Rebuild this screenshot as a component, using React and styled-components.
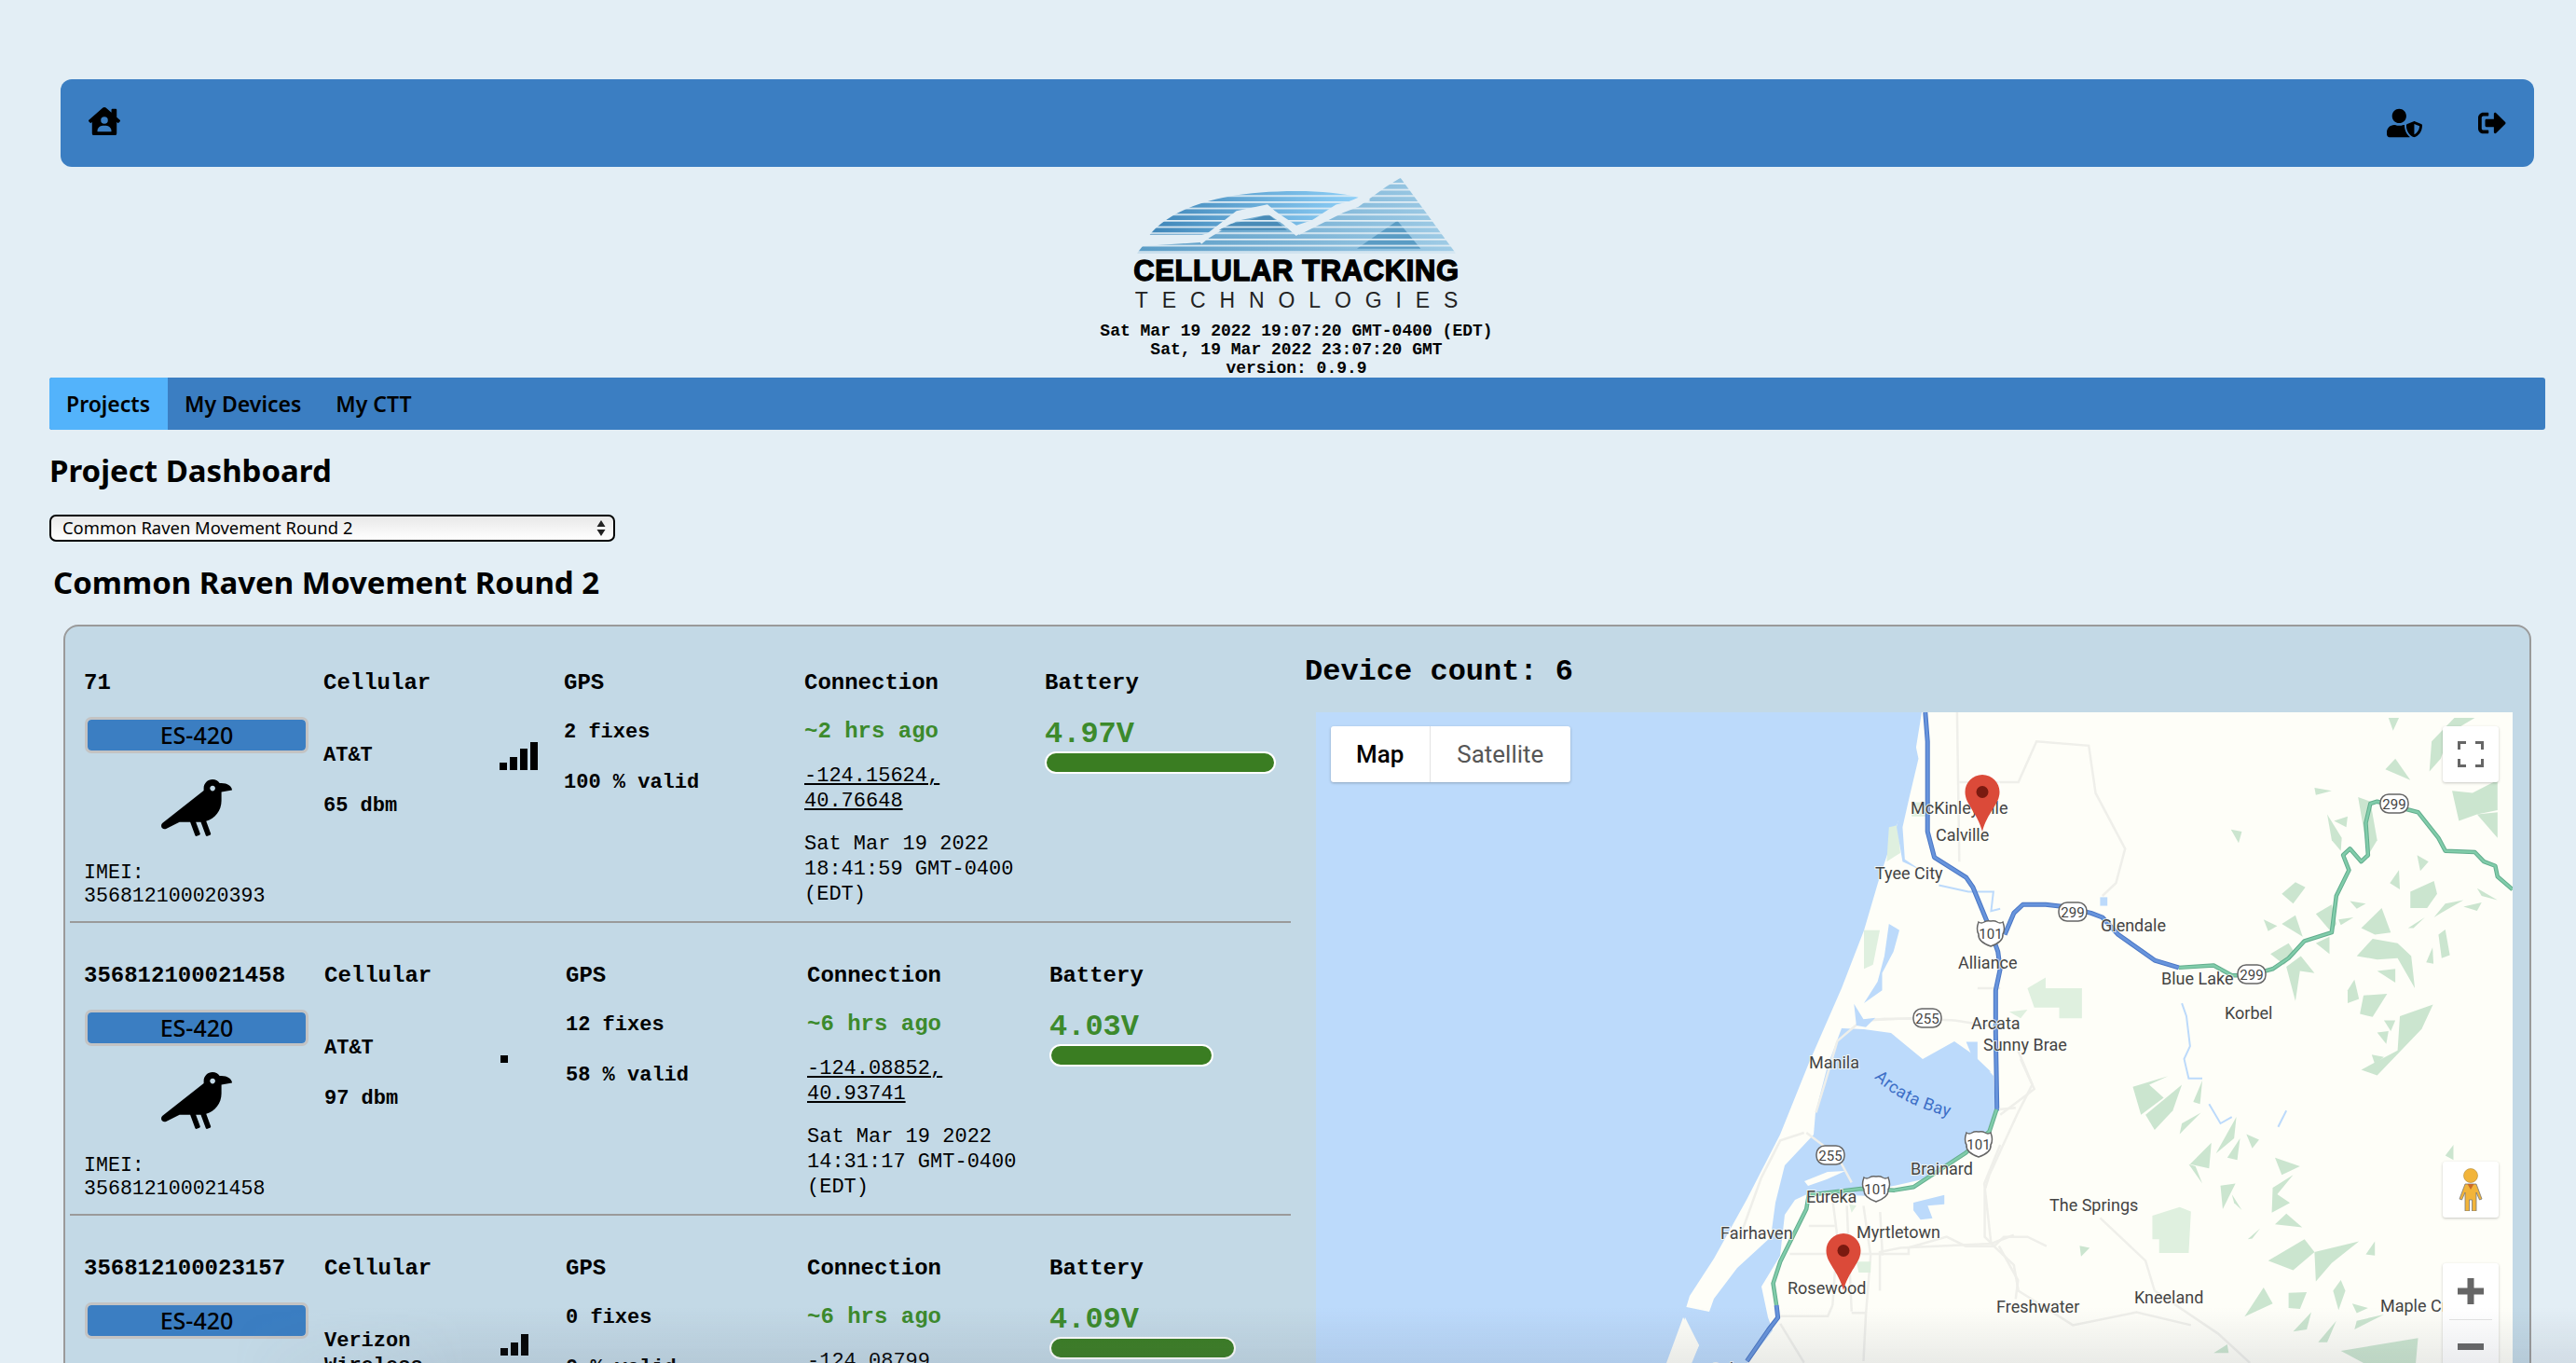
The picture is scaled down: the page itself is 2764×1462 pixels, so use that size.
import React from 'react'
import styled, { createGlobalStyle } from 'styled-components'
import { FaHouseUser, FaUserShield, FaSignOutAlt, FaCrow } from 'react-icons/fa'

const GlobalStyle = createGlobalStyle`
  html, body {
    margin: 0;
    height: 1462px;
    overflow: hidden;
    background: #e3eef5;
    color: #000;
  }
`

const Page = styled.div`
  height: 1462px;
  overflow: hidden;
  padding: 85px 33px 0 53px;
  box-sizing: border-box;
`

const TopBar = styled.header`
  margin: 0 12px 0 12px;
  height: 94px;
  background: #3b7ec2;
  border-radius: 12px;
  display: flex;
  align-items: flex-start;
  justify-content: space-between;
  padding: 28px 30px 0;
  box-sizing: border-box;
`

const IconGroup = styled.div`
  display: flex;
  align-items: center;
  gap: 60px;
`

const Brand = styled.div`
  display: flex;
  flex-direction: column;
  align-items: center;
  padding-right: 2px;
  margin-top: 1px;
`

const LogoName = styled.div`
  font: 900 31px/30px "Liberation Sans", Arial, sans-serif;
  -webkit-text-stroke: 1.3px #000;
  letter-spacing: 0.6px;
  margin-top: 4px;
  white-space: nowrap;
`

const LogoSub = styled.div`
  font: 400 23px/30px "Liberation Sans", Arial, sans-serif;
  color: #222;
  letter-spacing: 14.9px;
  margin-right: -15px;
  margin-top: 1px;
  white-space: nowrap;
`

const Stamp = styled.div`
  font: 700 18px/20px "Liberation Mono", "Courier New", monospace;
  text-align: center;
  margin-top: ${p => p.$top || 0}px;
`

const NavBar = styled.nav`
  height: 56px;
  background: #3b7ec2;
  border-radius: 3px;
  display: flex;
`

const NavTab = styled.a`
  display: flex;
  align-items: center;
  padding: 0 19px 0 18px;
  font: 600 23px/1 "Noto Sans", "Open Sans", sans-serif;
  background: ${p => (p.$active ? '#53b3fb' : 'transparent')};
  border-radius: ${p => (p.$active ? '3px 0 0 3px' : '0')};
`

const PageTitle = styled.h1`
  margin: 20px 0 0;
  font: 700 33px/48px "Noto Sans", "Open Sans", sans-serif;
`

const SelectWrap = styled.div`
  position: relative;
  width: 607px;
  height: 29px;
  margin-top: 23px;
`

const ProjectSelect = styled.select`
  appearance: none;
  width: 100%;
  height: 100%;
  box-sizing: border-box;
  border: 2px solid #000;
  border-radius: 7px;
  background: linear-gradient(#e8e8e8, #ffffff);
  padding: 0 0 0 12px;
  font: 400 18.4px/1 "Noto Sans", "Open Sans", sans-serif;
  color: #000;
`

const SelectArrows = styled.svg`
  position: absolute;
  right: 10px;
  top: 6px;
  pointer-events: none;
`

const ProjectName = styled.h2`
  margin: 20px 0 0 4px;
  font: 700 33px/48px "Noto Sans", "Open Sans", sans-serif;
`

const Panel = styled.section`
  margin: 21px 0 0 15px;
  width: 2648px;
  box-sizing: border-box;
  border: 2px solid #9a9a9a;
  border-radius: 16px;
  background: #c3d9e6;
  display: flex;
  height: 900px;
  overflow: hidden;
`

const DeviceList = styled.div`
  width: 1310px;
  margin-left: 5px;
  padding-top: 4px;
  flex: none;
`

const Row = styled.article`
  height: 314px;
  box-sizing: border-box;
  padding: 43px 0 0 15px;
  border-bottom: 2px solid #9a9a9a;
  display: grid;
  grid-template-columns: ${p => p.$cols};
  align-content: start;
  font-family: "Liberation Mono", "Courier New", monospace;
`

const Cell = styled.div`
  display: flex;
  flex-direction: column;
  align-items: flex-start;
`

const Head = styled.div`
  font-size: 24px;
  font-weight: 700;
  line-height: 28px;
  white-space: nowrap;
`

const Badge = styled.div`
  width: 240px;
  height: 39px;
  box-sizing: border-box;
  margin: 22px 0 0 1px;
  border: 3px solid #c3c3c3;
  border-radius: 7px;
  background: #3b7ec2;
  background-clip: padding-box;
  display: flex;
  align-items: center;
  justify-content: center;
  font: 500 25px/1 "Noto Sans", sans-serif;
`

const BirdWrap = styled.div`
  width: 242px;
  height: 61px;
  margin-top: 28px;
  display: flex;
  justify-content: center;
`

const Imei = styled.div`
  margin-top: 27px;
  font-size: 21.6px;
  line-height: 25px;
`

const CellularBody = styled.div`
  display: grid;
  grid-template-columns: 189px auto;
`

const Carrier = styled.div`
  padding-top: 50px;
  font-size: 22px;
  font-weight: 700;
  line-height: 27px;
  display: flex;
  flex-direction: column;
  gap: 27px;
`

const Bars = styled.div`
  display: flex;
  align-items: flex-end;
  gap: 3px;
  height: 30px;
  margin-top: 49px;
`

const SignalBar = styled.span`
  width: 8px;
  height: ${p => p.$h}px;
  background: #000;
`

const GpsBody = styled.div`
  margin-top: 25px;
  font-size: 22px;
  font-weight: 700;
  line-height: 27px;
  display: flex;
  flex-direction: column;
  gap: 27px;
`

const LastSeen = styled.div`
  margin-top: 24px;
  color: #3c8a2c;
  font-size: 24px;
  font-weight: 700;
  line-height: 28px;
  white-space: nowrap;
`

const Coords = styled.a`
  margin-top: 20px;
  font-size: 22px;
  line-height: 27px;
  text-decoration: underline;
  width: 258px;
`

const Stamped = styled.div`
  margin-top: 19px;
  font-size: 22px;
  line-height: 27px;
  width: 258px;
`

const Volts = styled.div`
  margin-top: 22px;
  color: #3c8a2c;
  font-size: 32px;
  font-weight: 700;
  line-height: 37px;
`

const BatteryBar = styled.div`
  width: ${p => p.$w}px;
  height: 24px;
  box-sizing: border-box;
  border: 2px solid #fff;
  border-radius: 12px;
  background: #3a7d22;
`

const MapColumn = styled.div`
  margin-left: 15px;
  flex: 1;
  min-width: 0;
  padding-top: 30px;
`

const DeviceCount = styled.div`
  font: 700 32px/38px "Liberation Mono", "Courier New", monospace;
`

const MapFrame = styled.div`
  position: relative;
  margin: 24px 0 0 12px;
  width: 1284px;
  height: 760px;
  overflow: hidden;
  background: #bcdafb;
`

const MapCanvas = styled.svg`
  display: block;
  width: 1284px;
  height: 760px;
`

const MapType = styled.div`
  position: absolute;
  left: 16px;
  top: 15px;
  width: 257px;
  height: 60px;
  display: flex;
  background: #fff;
  border-radius: 3px;
  box-shadow: 0 1px 3px rgba(0, 0, 0, 0.25);
`

const MapTypeBtn = styled.div`
  display: flex;
  align-items: center;
  justify-content: center;
  width: ${p => p.$w}px;
  font: ${p => (p.$on ? 500 : 400)} 26px/1 Roboto, sans-serif;
  color: ${p => (p.$on ? '#000' : '#565656')};
  border-right: ${p => (p.$on ? '1px solid #e3e3e3' : 'none')};
`

const MapButton = styled.div`
  position: absolute;
  left: 1209px;
  top: ${p => p.$top}px;
  width: 60px;
  height: ${p => p.$h || 60}px;
  background: #fff;
  border-radius: 3px;
  box-shadow: 0 1px 3px rgba(0, 0, 0, 0.22);
  display: flex;
  flex-direction: column;
  align-items: center;
  justify-content: center;
`

const ZoomStep = styled.div`
  height: 60px;
  width: 46px;
  display: flex;
  align-items: center;
  justify-content: center;
  border-bottom: ${p => (p.$line ? '1px solid #e4e4e4' : 'none')};
`

const Vignette = styled.div`
  position: fixed;
  left: 0;
  right: 0;
  bottom: 0;
  height: 60px;
  pointer-events: none;
  background: linear-gradient(rgba(90, 100, 120, 0), rgba(90, 100, 120, 0.12));
  mask-image: linear-gradient(90deg, transparent 250px, #000 500px);
`

const Place = styled.text`
  font: 400 18px Roboto, sans-serif;
  fill: #444;
  paint-order: stroke;
  stroke: rgba(254, 254, 248, 0.75);
  stroke-width: 2px;
`

const BayName = styled.text`
  font: 400 18px Roboto, sans-serif;
  fill: #3d6fc7;
  letter-spacing: 0.6px;
`

const ShieldText = styled.text`
  font: 400 15px Roboto, sans-serif;
  fill: #444;
  text-anchor: middle;
`

const LogoArt = () => (
  <svg width="500" height="92" viewBox="0 0 1500 276">
    <defs>
      <linearGradient id="domeFill" x1="0" x2="1" y1="0" y2="0">
        <stop offset="0" stopColor="#3f86b8" />
        <stop offset="1" stopColor="#8fd0f8" />
      </linearGradient>
      <linearGradient id="rangeFill" x1="0" x2="1" y1="0" y2="0">
        <stop offset="0" stopColor="#5a9cc6" />
        <stop offset="1" stopColor="#a0cce6" />
      </linearGradient>
      <pattern id="logoLines" width="20" height="20" patternUnits="userSpaceOnUse" y="8">
        <rect width="20" height="5" fill="#e3eef5" />
      </pattern>
    </defs>
    <path d="M278 215C340 140 480 75 750 75C830 75 900 82 950 95L880 125L810 165L750 185L660 125L560 145L470 210L445 215Z" fill="url(#domeFill)" />
    <polygon points="238,274 1262,274 1085,32 1040,60 985,100 950,125 900,145 760,215 660,150 560,170 470,225 440,240 255,252" fill="url(#rangeFill)" />
    <polygon points="1075,170 1150,260 945,260" fill="#5a9cc4" />
    <polygon points="540,180 590,170 660,150 720,200 500,200" fill="#4a8cb8" />
    <rect x="230" y="20" width="1050" height="256" fill="url(#logoLines)" />
    <polyline points="440,240 470,215 560,145 655,125 750,210 880,125 985,100" fill="none" stroke="#e3eef5" strokeWidth="14" />
  </svg>
)

const forest = [
  '1155,65 1178,65 1165,95', '1148,185 1170,160 1203,210', '1245,190 1250,120 1300,65 1345,65 1290,100 1270,160',
  '992,228 1030,235 995,245', '1295,235 1340,240 1395,210 1395,280 1350,290 1310,305', '1350,290 1395,285 1395,345',
  '1020,290 1052,345 1050,375 1030,350', '1035,305 1065,295 1062,320', '808,325 832,330 825,357',
  '1088,250 1115,260 1130,350 1110,385', '1218,385 1243,400 1225,422', '1158,450 1178,420 1180,465',
  '920,475 950,448 972,460 945,498', '1203,470 1255,445 1262,475 1240,508 1203,508', '1070,492 1105,498 1085,510',
  '1255,530 1280,498 1320,490 1270,520', '1320,505 1360,495 1350,515', '1350,462 1395,490 1360,480',
  '880,535 910,550 890,562', '920,545 950,525 966,575', '995,522 1030,500 1040,545 1030,565',
  '1045,535 1078,530 1050,548', '1095,555 1140,508 1160,565 1125,570', '1198,555 1235,530 1210,555',
  '1265,570 1280,558 1290,618 1272,625', '1238,635 1252,600 1254,638',
  '1085,620 1120,580 1175,590 1205,620 1213,695 1175,625 1130,628', '1130,655 1170,650 1170,682',
  '895,615 935,590 950,615 925,640', '930,645 962,620 992,660 960,655 950,725', '995,590 1025,575 1025,615',
  '1065,700 1080,675 1090,720 1065,730', '1100,712 1152,708 1120,762 1092,755', '1145,770 1170,770 1160,795',
  '1095,885 1175,840 1180,760 1253,733 1228,790 1130,898', '1130,798 1155,795 1150,825', '1118,850 1145,855 1125,872',
  '592,925 670,900 628,920 660,950 610,990', '620,990 700,920 680,980 640,1025', '725,960 745,910 740,965',
  '695,1035 742,985 700,1010', '775,1080 820,995 815,1045', '800,1090 828,1045 822,1095', '842,1035 870,1048 855,1068',
  '718,1105 765,1055 760,1115', '715,1105 745,1150 730,1110', '905,1090 960,1110 920,1130', '785,1155 818,1150 790,1210',
  '810,1175 832,1212 815,1195', '900,1160 945,1130 910,1175 938,1195 898,1218', '905,1245 930,1220 965,1252',
  '845,1280 872,1255 855,1278', '475,1295 497,1300 478,1320', '1280,1085 1298,1060 1298,1095',
  '890,1330 970,1280 992,1310 945,1352', '992,1310 1090,1285 1030,1335 995,1378', '1105,1315 1125,1285 1125,1318',
  '838,1460 880,1392 900,1430', '935,1405 975,1403 960,1442 935,1440', '1033,1400 1050,1375 1060,1400 1045,1445',
  '1075,1430 1110,1440 1085,1452', '1080,1490 1145,1455 1085,1470', '945,1495 985,1450 975,1490',
  '1000,1520 1040,1470 1020,1520', '1050,1540 1220,1510 1215,1568 1100,1568', '770,1545 800,1525 803,1545',
]

const parks = [
  '360,695 400,670 400,695 480,695 480,765 430,765 430,740 375,740',
  '635,1225 695,1205 720,1215 715,1312 650,1312 650,1280 635,1280',
  '320,750 360,745 345,765', '105,262 145,262 135,295 105,295', '55,320 75,315 80,380 50,400',
  '0,560 35,560 20,640 0,650',
]

const eastRoads = [
  '205,52 210,400', '210,215 340,215 380,120 495,130 510,240 575,370 555,450 525,480',
  '300,990 375,930 345,860', '330,1270 280,1290 80,1300 35,1310 35,1400', '0,770 100,765 200,770 290,785',
  '280,1290 265,1150 300,1060', '250,695 300,695', '520,1230 620,1330 640,1400 780,1500 850,1568',
  '280,1290 330,1340 340,1400 460,1480 600,1450 720,1480',
]

const southRoads = [
  '1055,465 1120,540 1150,625', '1050,465 1000,490 960,610 920,780', '1075,400 1095,300 1120,170 1170,105 1220,98 1280,98',
  '1110,680 1120,800 1110,1020', '1140,700 1150,1040', '1175,700 1190,860 1180,1050 1175,1200', '1210,720 1215,860',
  '1060,765 1115,765', '1020,855 1270,855 1270,835 1350,800 1390,830 1450,830 1470,800 1520,800 1560,830',
  '1000,1055 1100,1055 1110,1020', '1150,1045 1180,1045', '1000,1080 1050,1205', '1440,600 1430,650 1430,800 1450,830',
  '1460,390 1495,385', '1500,200 1530,310 1500,400 1440,600', '1460,830 1500,940 1495,1000',
]

const Road = ({ points, color, edge, width = 3 }) => (
  <>
    <polyline points={points} fill="none" stroke={edge} strokeWidth={width + 2} strokeLinejoin="round" vectorEffect="non-scaling-stroke" />
    <polyline points={points} fill="none" stroke={color} strokeWidth={width} strokeLinejoin="round" vectorEffect="non-scaling-stroke" />
  </>
)

const Shield = ({ x, y, label, us }) => (
  <g>
    {us ? (
      <path
        d={`M${x - 13} ${y - 12}q3 2 6 0q3 -2 7 -1q4 -1 7 1q3 2 6 0q3 8 0 13q1 8 -13 13q-14 -5 -13 -13q-3 -5 0 -13Z`}
        fill="#fff"
        stroke="#666"
        strokeWidth="1.5"
      />
    ) : (
      <rect x={x - 15} y={y - 10} width="30" height="20" rx="9" fill="#fff" stroke="#666" strokeWidth="1.5" />
    )}
    <ShieldText x={x} y={y + 5.5}>{label}</ShieldText>
  </g>
)

const Pin = ({ x, y }) => (
  <g transform={`translate(${x} ${y})`}>
    <path d="M18.5 0C8.3 0 0 8.3 0 18.5C0 32 13 40 18.5 61C24 40 37 32 37 18.5C37 8.3 28.7 0 18.5 0Z" fill="#db4a39" />
    <circle cx="18.5" cy="18.5" r="6.5" fill="#7a1a10" />
  </g>
)

const MapArt = () => (
  <MapCanvas viewBox="1412 764 1284 760">
    <polygon
      points="2062,764 2051,832 2036,883 2015,947 2000,998 1976,1060 1941,1140 1910,1217 1874,1287 1839,1350 1813,1390 1806,1413 1788,1462 1770,1524 2696,1524 2696,764"
      fill="#fefef8"
    />
    <polygon
      points="1976,1103 2000,1104 2029,1108 2063,1136 2097,1117 2117,1131 2139,1154 2141,1191 2132,1214 2107,1237 2063,1265 2027,1273 2007,1283 1941,1280 1926,1287 1915,1303 1910,1347 1890,1380 1897,1413 1902,1427 1875,1462 1850,1524 1790,1524 1823,1443 1806,1413 1800,1400 1834,1407 1839,1393 1864,1360 1900,1327 1905,1290 1915,1250 1946,1217 1948,1193 1961,1143"
      fill="#bcdafb"
    />
    <polygon points="1936,1267 1961,1257 1980,1256 1960,1265 1940,1272" fill="#fefef8" />
    <polygon points="1808,1413 1823,1443 1810,1470 1790,1480" fill="#fefef8" />

    <g transform="translate(2000 740) scale(0.4873 0.4604)">
      {parks.map(p => <polygon key={p} points={p} fill="#dff0df" />)}
      {forest.map(p => <polygon key={p} points={p} fill="#cbe5cf" />)}
      <polygon points="520,483 536,483 536,503 520,503" fill="#bcdafb" />
      <polygon points="55,545 78,560 65,610 40,660 40,700 0,730 30,680 45,620" fill="#bcdafb" />
      <polygon points="112,120 120,160 100,250 85,320 90,395 125,420 85,400 72,320 95,200" fill="#bcdafb" />
      <polygon points="225,820 250,820 250,860 280,890 250,885" fill="#bcdafb" />
      <polyline points="700,730 710,760 718,830 705,860 715,905 745,905" fill="none" stroke="#bcdafb" strokeWidth="2" vectorEffect="non-scaling-stroke" />
      <polyline points="760,965 785,1010 810,995" fill="none" stroke="#bcdafb" strokeWidth="2" vectorEffect="non-scaling-stroke" />
      <polyline points="930,980 912,1018" fill="none" stroke="#bcdafb" strokeWidth="2" vectorEffect="non-scaling-stroke" />
      <polyline points="165,455 230,470 285,470 280,515 300,510" fill="none" stroke="#bcdafb" strokeWidth="2" vectorEffect="non-scaling-stroke" />
      {eastRoads.map(p => <polyline key={p} points={p} fill="none" stroke="#efefea" strokeWidth="2.5" vectorEffect="non-scaling-stroke" />)}
      <Road points="693,647 770,642 810,665 850,665 900,650 935,625 970,585 1030,565 1040,480 1068,420 1055,385 1070,370 1095,400 1110,385 1105,310 1115,265 1130,260 1220,285 1265,345 1280,375 1345,378 1365,400 1390,410 1395,435 1428,465" color="#80ccaa" edge="#62ad8d" width={2.5} />
      <Road points="135,52 140,120 140,330 155,390 225,437 240,460 275,550 295,610 300,650 290,700 290,800 293,980" color="#6794dc" edge="#4a76c4" />
      <Road points="310,570 330,520 350,500 400,500 440,505 500,520 525,530 560,570 640,630 693,647" color="#6794dc" edge="#4a76c4" />
    </g>

    <g transform="translate(1400 1060) scale(0.5102 0.3333)">
      {southRoads.map(p => <polyline key={p} points={p} fill="none" stroke="#efefea" strokeWidth="2.5" vectorEffect="non-scaling-stroke" />)}
      <polygon points="1280,690 1345,665 1345,695 1310,700 1320,740 1295,745 1280,715" fill="#bcdafb" />
      <polygon points="1155,50 1175,100 1200,95 1180,125 1160,120" fill="#bcdafb" />
      <polygon points="1160,880 1190,880 1190,915 1165,915" fill="#dff0df" />
      <polygon points="1145,695 1160,700 1150,722" fill="#dff0df" />
      <Road points="1455,390 1440,460 1390,530 1280,640 1240,650 1170,645 1060,665 1055,710 1000,880 985,950 992,1020" color="#80ccaa" edge="#62ad8d" width={2.5} />
      <Road points="992,1020 995,1060 975,1100 930,1200" color="#6794dc" edge="#4a76c4" />
    </g>

    <Place x="2050" y="873">McKinleyville</Place>
    <Place x="2077" y="902">Calville</Place>
    <Place x="2012" y="943">Tyee City</Place>
    <Place x="2254" y="999">Glendale</Place>
    <Place x="2101" y="1039">Alliance</Place>
    <Place x="2319" y="1056">Blue Lake</Place>
    <Place x="2387" y="1093">Korbel</Place>
    <Place x="2115" y="1104">Arcata</Place>
    <Place x="2128" y="1127">Sunny Brae</Place>
    <Place x="1941" y="1146">Manila</Place>
    <Place x="2050" y="1260">Brainard</Place>
    <Place x="1938" y="1290">Eureka</Place>
    <Place x="1992" y="1328">Myrtletown</Place>
    <Place x="1846" y="1329">Fairhaven</Place>
    <Place x="1918" y="1388">Rosewood</Place>
    <Place x="2199" y="1299">The Springs</Place>
    <Place x="2142" y="1408">Freshwater</Place>
    <Place x="2290" y="1398">Kneeland</Place>
    <Place x="2554" y="1407">Maple Creek</Place>
    <Place x="1795" y="1475">King Salmon</Place>

    <path id="bayCurve" d="M2011 1156Q2040 1186 2100 1200" fill="none" />
    <BayName>
      <textPath href="#bayCurve">Arcata Bay</textPath>
    </BayName>

    <Shield x={2224} y={978} label="299" />
    <Shield x={2416} y={1045} label="299" />
    <Shield x={2569} y={862} label="299" />
    <Shield x={2068} y={1092} label="255" />
    <Shield x={1964} y={1239} label="255" />
    <Shield x={2136} y={1001} label="101" us />
    <Shield x={2123} y={1227} label="101" us />
    <Shield x={2013} y={1275} label="101" us />

    <path d="M2128 829C2140 829 2148 839 2147 850" fill="none" stroke="#fff" strokeWidth="1" />
    <Pin x={2108.5} y={831} />
    <Pin x={1959.5} y={1323} />
  </MapCanvas>
)

const devices = [
  {
    name: '71', imei: '356812100020393', cols: '257px 258px 258px 258px 258px',
    carrier: 'AT&T', dbm: '65 dbm', bars: [8, 14, 23, 30],
    fixes: '2 fixes', valid: '100 % valid', ago: '~2 hrs ago', coords: '-124.15624, 40.76648',
    stamp: 'Sat Mar 19 2022 18:41:59 GMT-0400 (EDT)', volts: '4.97V', level: 248,
  },
  {
    name: '356812100021458', imei: '356812100021458', cols: '258px 259px 259px 260px 258px',
    carrier: 'AT&T', dbm: '97 dbm', bars: [8],
    fixes: '12 fixes', valid: '58 % valid', ago: '~6 hrs ago', coords: '-124.08852, 40.93741',
    stamp: 'Sat Mar 19 2022 14:31:17 GMT-0400 (EDT)', volts: '4.03V', level: 176,
  },
  {
    name: '356812100023157', imei: '356812100023157', cols: '258px 259px 259px 260px 258px',
    carrier: 'Verizon Wireless', dbm: '88 dbm', bars: [8, 14, 23],
    fixes: '0 fixes', valid: '0 % valid', ago: '~6 hrs ago', coords: '-124.08799, 40.93741',
    stamp: 'Sat Mar 19 2022 14:31:17 GMT-0400 (EDT)', volts: '4.09V', level: 200,
  },
]

const DeviceRow = ({ d }) => (
  <Row $cols={d.cols}>
    <Cell>
      <Head>{d.name}</Head>
      <Badge>ES-420</Badge>
      <BirdWrap>
        <FaCrow style={{ width: 76, height: 61 }} />
      </BirdWrap>
      <Imei>IMEI:<br />{d.imei}</Imei>
    </Cell>
    <Cell>
      <Head>Cellular</Head>
      <CellularBody>
        <Carrier>
          <div>{d.carrier}</div>
          <div>{d.dbm}</div>
        </Carrier>
        <Bars>
          {d.bars.map((h, i) => <SignalBar key={i} $h={h} />)}
        </Bars>
      </CellularBody>
    </Cell>
    <Cell>
      <Head>GPS</Head>
      <GpsBody>
        <div>{d.fixes}</div>
        <div>{d.valid}</div>
      </GpsBody>
    </Cell>
    <Cell>
      <Head>Connection</Head>
      <LastSeen>{d.ago}</LastSeen>
      <Coords>{d.coords}</Coords>
      <Stamped>{d.stamp}</Stamped>
    </Cell>
    <Cell>
      <Head>Battery</Head>
      <Volts>{d.volts}</Volts>
      <BatteryBar $w={d.level} />
    </Cell>
  </Row>
)

const App = () => (
  <Page>
    <GlobalStyle />
    <TopBar>
      <FaHouseUser size={34} />
      <IconGroup>
        <FaUserShield size={38} />
        <FaSignOutAlt size={30} />
      </IconGroup>
    </TopBar>
    <Brand>
      <LogoArt />
      <LogoName>CELLULAR TRACKING</LogoName>
      <LogoSub>TECHNOLOGIES</LogoSub>
      <Stamp $top={8}>Sat Mar 19 2022 19:07:20 GMT-0400 (EDT)</Stamp>
      <Stamp>Sat, 19 Mar 2022 23:07:20 GMT</Stamp>
      <Stamp>version: 0.9.9</Stamp>
    </Brand>
    <NavBar>
      <NavTab $active>Projects</NavTab>
      <NavTab>My Devices</NavTab>
      <NavTab>My CTT</NavTab>
    </NavBar>
    <PageTitle>Project Dashboard</PageTitle>
    <SelectWrap>
      <ProjectSelect defaultValue="raven">
        <option value="raven">Common Raven Movement Round 2</option>
      </ProjectSelect>
      <SelectArrows width="10" height="17" viewBox="0 0 10 17">
        <path d="M5 0L9.5 7H.5ZM5 17L.5 10H9.5Z" fill="#222" />
      </SelectArrows>
    </SelectWrap>
    <ProjectName>Common Raven Movement Round 2</ProjectName>
    <Panel>
      <DeviceList>
        {devices.map(d => <DeviceRow key={d.name} d={d} />)}
      </DeviceList>
      <MapColumn>
        <DeviceCount>Device count: 6</DeviceCount>
        <MapFrame>
          <MapArt />
          <MapType>
            <MapTypeBtn $on $w={106}>Map</MapTypeBtn>
            <MapTypeBtn $w={151}>Satellite</MapTypeBtn>
          </MapType>
          <MapButton $top={15}>
            <svg width="28" height="28" viewBox="0 0 28 28" fill="none" stroke="#666" strokeWidth="3">
              <path d="M1.5 9V1.5H9M19 1.5H26.5V9M26.5 19V26.5H19M9 26.5H1.5V19" />
            </svg>
          </MapButton>
          <MapButton $top={482}>
            <svg width="26" height="46" viewBox="0 0 26 46">
              <circle cx="13" cy="8" r="7.5" fill="#f2b43a" stroke="#b08a3a" strokeWidth=".6" />
              <path d="M7 17H19L25 33L22.5 34L19 26V46H14.5V34H11.5V46H7V26L3.5 34L1 33Z" fill="#f2b43a" stroke="#777" strokeWidth=".8" />
              <path d="M9.5 17H16.5L13 23Z" fill="#c9692a" />
            </svg>
          </MapButton>
          <MapButton $top={591} $h={120}>
            <ZoomStep $line>
              <svg width="28" height="28" viewBox="0 0 28 28">
                <path d="M10.5 0H17.5V10.5H28V17.5H17.5V28H10.5V17.5H0V10.5H10.5Z" fill="#666" />
              </svg>
            </ZoomStep>
            <ZoomStep>
              <svg width="28" height="8" viewBox="0 0 28 8">
                <rect width="28" height="7" fill="#666" />
              </svg>
            </ZoomStep>
          </MapButton>
        </MapFrame>
      </MapColumn>
    </Panel>
    <Vignette />
  </Page>
)

export default App
